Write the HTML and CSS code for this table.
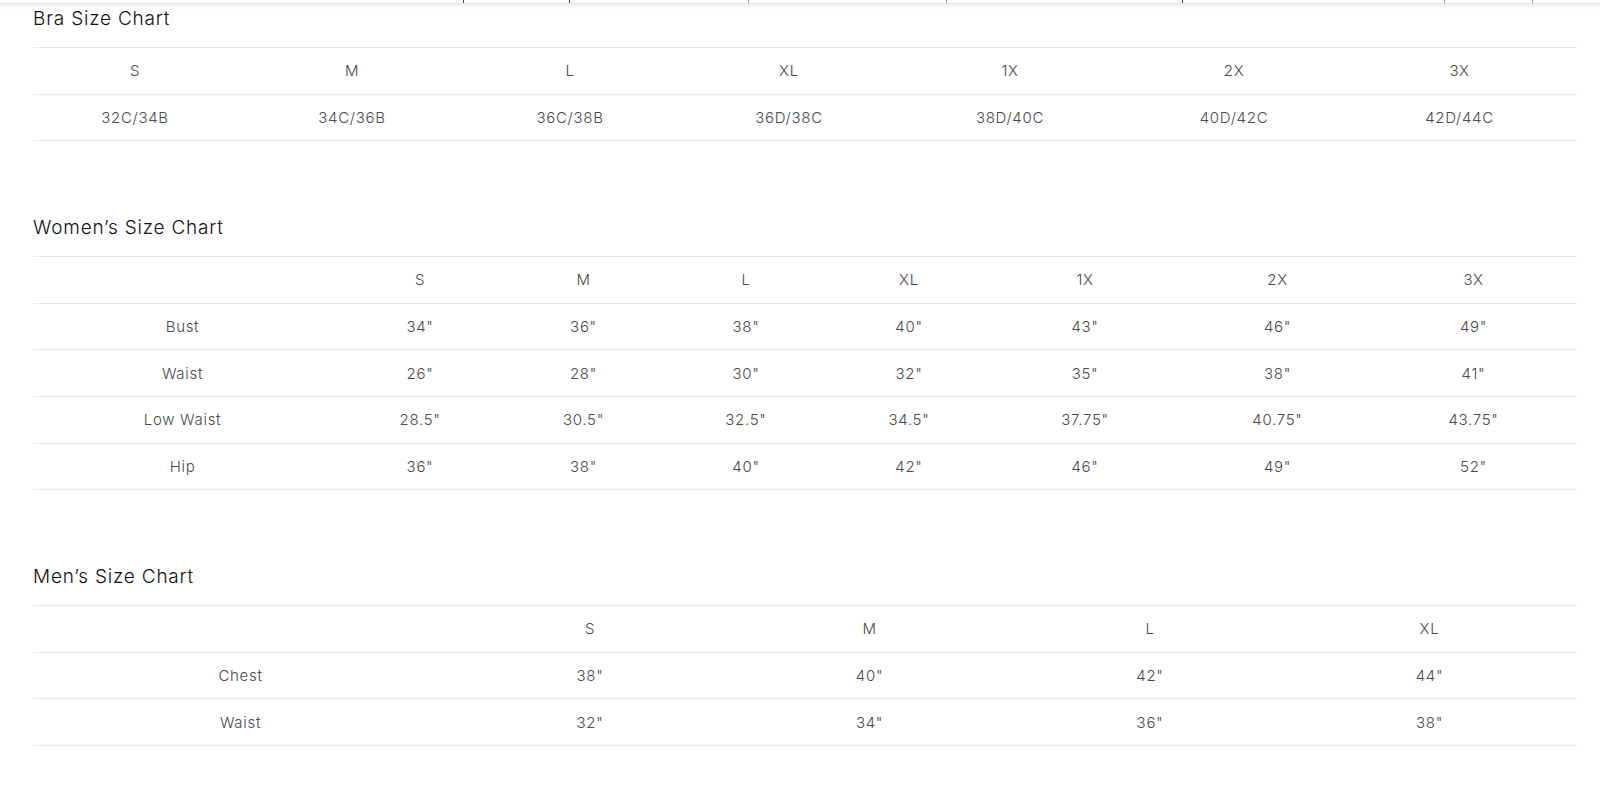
FILE: index.html
```html
<!DOCTYPE html>
<html lang="en">
<head>
<meta charset="utf-8">
<title>Size Charts</title>
<link rel="stylesheet" href="styles.css">
</head>
<body>
<header class="topbar">
  <span class="seg s1"></span>
  <span class="seg s2"></span>
  <span class="seg s3 light"></span>
  <span class="seg s4 light"></span>
  <span class="seg s5"></span>
  <span class="seg s6 light"></span>
  <span class="seg s7 light"></span>
</header>
<main class="page">
  <section class="chart">
    <h2 class="chart-title">Bra Size Chart</h2>
    <table class="size-table bra">
      <colgroup><col><col><col><col><col><col><col></colgroup>
      <tr><td>S</td><td>M</td><td>L</td><td>XL</td><td>1X</td><td>2X</td><td>3X</td></tr>
      <tr><td>32C/34B</td><td>34C/36B</td><td>36C/38B</td><td>36D/38C</td><td>38D/40C</td><td>40D/42C</td><td>42D/44C</td></tr>
    </table>
  </section>
  <section class="chart">
    <h2 class="chart-title">Women’s Size Chart</h2>
    <table class="size-table women">
      <colgroup><col><col><col><col><col><col><col><col></colgroup>
      <tr><td></td><td>S</td><td>M</td><td>L</td><td>XL</td><td>1X</td><td>2X</td><td>3X</td></tr>
      <tr><td>Bust</td><td>34"</td><td>36"</td><td>38"</td><td>40"</td><td>43"</td><td>46"</td><td>49"</td></tr>
      <tr><td>Waist</td><td>26"</td><td>28"</td><td>30"</td><td>32"</td><td>35"</td><td>38"</td><td>41"</td></tr>
      <tr><td>Low Waist</td><td>28.5"</td><td>30.5"</td><td>32.5"</td><td>34.5"</td><td>37.75"</td><td>40.75"</td><td>43.75"</td></tr>
      <tr><td>Hip</td><td>36"</td><td>38"</td><td>40"</td><td>42"</td><td>46"</td><td>49"</td><td>52"</td></tr>
    </table>
  </section>
  <section class="chart">
    <h2 class="chart-title">Men’s Size Chart</h2>
    <table class="size-table men">
      <colgroup><col><col><col><col><col></colgroup>
      <tr><td></td><td>S</td><td>M</td><td>L</td><td>XL</td></tr>
      <tr><td>Chest</td><td>38"</td><td>40"</td><td>42"</td><td>44"</td></tr>
      <tr><td>Waist</td><td>32"</td><td>34"</td><td>36"</td><td>38"</td></tr>
    </table>
  </section>
</main>
</body>
</html>
```
FILE: styles.css
```css
html, body {
  margin: 0;
  padding: 0;
  background: #ffffff;
}

body {
  font-family: "Inter", "Open Sans", sans-serif;
  color: #555555;
}

.topbar {
  display: flex;
  height: 3px;
  background: #ffffff;
  border-bottom: 1px solid #e2e2e2;
  box-shadow: 0 1px 5px rgba(0, 0, 0, 0.12);
  position: relative;
  z-index: 2;
}

.seg {
  flex: none;
  height: 3px;
  border-right: 1px solid #444444;
}
.seg.light { border-right-color: #9a9a9a; }
.s1 { width: 463px; }
.s2 { width: 105px; }
.s3 { width: 178px; }
.s4 { width: 197px; }
.s5 { width: 235px; }
.s6 { width: 261px; }
.s7 { width: 87px; }

.page {
  padding: 0 23px 0 33px;
}

.chart + .chart {
  margin-top: 72px;
}

.chart-title {
  margin: 0;
  padding: 3px 0 16px;
  height: 24px;
  font-size: 19px;
  line-height: 24px;
  font-weight: 300;
  letter-spacing: 0.8px;
  color: #111111;
}

.size-table {
  width: 1544px;
  table-layout: fixed;
  border-collapse: collapse;
  border-spacing: 0;
}

.size-table td {
  box-sizing: border-box;
  height: 46.6px;
  padding: 0 11px 0 0;
  border-top: 1px solid #e9e9e9;
  border-bottom: 1px solid #e9e9e9;
  text-align: center;
  vertical-align: middle;
  font-size: 15px;
  font-weight: 300;
  letter-spacing: 0.7px;
  color: #4a4a4a;
}

.bra col:nth-child(1) { width: 215px; }
.bra col:nth-child(2) { width: 219px; }
.bra col:nth-child(3) { width: 217px; }
.bra col:nth-child(4) { width: 221px; }
.bra col:nth-child(5) { width: 221px; }
.bra col:nth-child(6) { width: 227px; }
.bra col:nth-child(7) { width: 224px; }

.women col:nth-child(1) { width: 310px; }
.women col:nth-child(2) { width: 165px; }
.women col:nth-child(3) { width: 162px; }
.women col:nth-child(4) { width: 163px; }
.women col:nth-child(5) { width: 163px; }
.women col:nth-child(6) { width: 189px; }
.women col:nth-child(7) { width: 196px; }
.women col:nth-child(8) { width: 196px; }

.men col:nth-child(1) { width: 426px; }
.men col:nth-child(2) { width: 273px; }
.men col:nth-child(3) { width: 286px; }
.men col:nth-child(4) { width: 275px; }
.men col:nth-child(5) { width: 284px; }
```
